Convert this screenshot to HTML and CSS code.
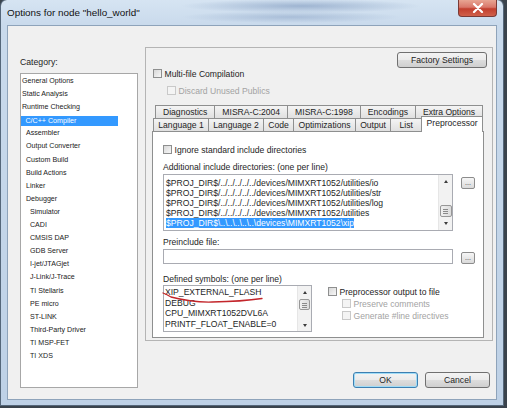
FILE: index.html
```html
<!DOCTYPE html>
<html>
<head>
<meta charset="utf-8">
<link rel="stylesheet" href="styles.css">
</head>
<body>
<div class="window">
  <div class="titlebar">
    <span class="title">Options for node "hello_world"</span>
    <div class="close">
      <svg width="12" height="10" viewBox="0 0 12 10"><path d="M2 1 L10 9 M10 1 L2 9" stroke="#fff" stroke-width="2.2" stroke-linecap="round"/></svg>
    </div>
  </div>
  <div class="client">
    <div class="left">
      <div class="cat-label">Category:</div>
      <div class="tree">
        <div class="item l0">General Options</div>
        <div class="item l0">Static Analysis</div>
        <div class="item l0">Runtime Checking</div>
        <div class="item l1 sel"><span>C/C++ Compiler</span></div>
        <div class="item l1">Assembler</div>
        <div class="item l1">Output Converter</div>
        <div class="item l1">Custom Build</div>
        <div class="item l1">Build Actions</div>
        <div class="item l1">Linker</div>
        <div class="item l1">Debugger</div>
        <div class="item l2">Simulator</div>
        <div class="item l2">CADI</div>
        <div class="item l2">CMSIS DAP</div>
        <div class="item l2">GDB Server</div>
        <div class="item l2">I-jet/JTAGjet</div>
        <div class="item l2">J-Link/J-Trace</div>
        <div class="item l2">TI Stellaris</div>
        <div class="item l2">PE micro</div>
        <div class="item l2">ST-LINK</div>
        <div class="item l2">Third-Party Driver</div>
        <div class="item l2">TI MSP-FET</div>
        <div class="item l2">TI XDS</div>
      </div>
    </div>
    <div class="right">
      <div class="panel">
        <div class="panel-top"><div class="btn factory">Factory Settings</div></div>
        <div class="check multi"><span class="box"></span>Multi-file Compilation</div>
        <div class="check discard disabled"><span class="box"></span>Discard Unused Publics</div>
        <div class="tabs">
          <div class="tabrow back">
            <div class="tab">Diagnostics</div>
            <div class="tab">MISRA-C:2004</div>
            <div class="tab">MISRA-C:1998</div>
            <div class="tab">Encodings</div>
            <div class="tab">Extra Options</div>
          </div>
          <div class="tabrow front">
            <div class="tab">Language 1</div>
            <div class="tab">Language 2</div>
            <div class="tab">Code</div>
            <div class="tab">Optimizations</div>
            <div class="tab">Output</div>
            <div class="tab list">List</div>
            <div class="tab sel">Preprocessor</div>
          </div>
          <div class="page">
            <div class="check ignore"><span class="box"></span>Ignore standard include directories</div>
            <div class="label lbl-inc">Additional include directories: (one per line)</div>
            <div class="row">
              <div class="textbox inc">
                <div class="lines">
                  <div>$PROJ_DIR$/../../../../../devices/MIMXRT1052/utilities/io</div>
                  <div>$PROJ_DIR$/../../../../../devices/MIMXRT1052/utilities/str</div>
                  <div>$PROJ_DIR$/../../../../../devices/MIMXRT1052/utilities/log</div>
                  <div>$PROJ_DIR$/../../../../../devices/MIMXRT1052/utilities</div>
                  <div><span class="hl">$PROJ_DIR$\..\..\..\..\..\devices\MIMXRT1052\xip</span></div>
                </div>
                <div class="sbar bottom">
                  <div class="arr"><span class="up"></span></div>
                  <div class="track"><div class="thumb"></div></div>
                  <div class="arr"><span class="down"></span></div>
                </div>
              </div>
              <div class="dots">...</div>
            </div>
            <div class="label lbl-pre">Preinclude file:</div>
            <div class="row">
              <div class="textbox preinc"></div>
              <div class="dots">...</div>
            </div>
            <div class="label lbl-def">Defined symbols: (one per line)</div>
            <div class="row defrow">
              <div class="textbox def">
                <div class="lines">
                  <div>XIP_EXTERNAL_FLASH</div>
                  <div>DEBUG</div>
                  <div>CPU_MIMXRT1052DVL6A</div>
                  <div>PRINTF_FLOAT_ENABLE=0</div>
                </div>
                <div class="sbar top">
                  <div class="arr"><span class="up"></span></div>
                  <div class="track"><div class="thumb"></div></div>
                  <div class="arr"><span class="down"></span></div>
                </div>
                <svg class="scribble" width="120" height="24" viewBox="0 0 120 24"><path d="M1 6 Q4 7 9 10 Q30 15.5 50 15 Q80 14.5 100 11.5" fill="none" stroke="#c3262b" stroke-width="1.3" stroke-linecap="round"/></svg>
              </div>
              <div class="ppgroup">
                <div class="check"><span class="box"></span>Preprocessor output to file</div>
                <div class="check sub disabled"><span class="box"></span>Preserve comments</div>
                <div class="check sub disabled"><span class="box"></span>Generate #line directives</div>
              </div>
            </div>
          </div>
        </div>
      </div>
      <div class="buttons">
        <div class="btn ok">OK</div>
        <div class="btn">Cancel</div>
      </div>
    </div>
  </div>
</div>
</body>
</html>
```
FILE: styles.css
```css
* { box-sizing: border-box; }
body {
  margin: 0;
  width: 507px;
  height: 408px;
  overflow: hidden;
  background: #3a434c;
  font-family: "Liberation Sans", Arial, sans-serif;
  color: #1e1e1e;
}
.window {
  margin-left: 1px;
  width: 502px;
  height: 405px;
  padding: 0 6px 5px 6px;
  border-radius: 6px 6px 0 0;
  box-shadow: 0 0 0 1px #55677a;
  display: flex;
  flex-direction: column;
  background:
    radial-gradient(ellipse 120px 7px at 300px 6px, rgba(60,95,150,.35), transparent),
    radial-gradient(ellipse 110px 6px at 290px 17px, rgba(60,95,150,.25), transparent),
    linear-gradient(180deg, #d6e4f2 0px, #c9daec 25px, #bed1e6 100%);
}
.titlebar {
  height: 25px;
  flex: none;
  display: flex;
  justify-content: space-between;
  align-items: flex-start;
}
.title {
  font-size: 9.9px;
  line-height: 11px;
  margin-top: 7px;
  color: #111;
}
.close {
  width: 39px;
  height: 17px;
  border: 1px solid #7a3a36;
  border-top: none;
  border-radius: 0 0 4px 4px;
  background: linear-gradient(180deg, #e8a593 0%, #d9776a 45%, #c23f2e 55%, #d0604a 100%);
  display: flex;
  align-items: center;
  justify-content: center;
}
.client {
  flex: 1;
  background: #f0f0f0;
  border: 1px solid #8ea3ba;
  display: flex;
  padding-left: 12px;
}
.left {
  width: 118px;
  padding-top: 31px;
}
.cat-label {
  font-size: 8.7px;
  line-height: 10px;
  height: 10px;
  margin-bottom: 6px;
}
.tree {
  height: 315px;
  background: #fff;
  border: 1px solid #a7a7a7;
  padding-top: 1px;
}
.item {
  font-size: 7.1px;
  line-height: 13.1px;
  height: 13.1px;
  color: #222;
  white-space: nowrap;
}
.item.l0 { padding-left: 1px; }
.item.l1 { padding-left: 5px; }
.item.l2 { padding-left: 9px; }
.item.sel { padding-left: 0; display: flex; align-items: center; }
.item.sel span {
  display: block;
  width: 97px;
  height: 10px;
  line-height: 10px;
  padding-left: 4.5px;
  background: #3399ff;
  color: #fff;
}
.right {
  margin-left: 7px;
  width: 348px;
  padding-top: 21px;
  display: flex;
  flex-direction: column;
}
.panel {
  height: 294px;
  border: 1px solid #b4b4b4;
  display: flex;
  flex-direction: column;
}
.panel-top {
  display: flex;
  justify-content: flex-end;
  padding: 4px 5px 0 0;
}
.btn {
  height: 16px;
  border: 1px solid #707070;
  border-radius: 3px;
  background: linear-gradient(180deg, #f3f3f3 0%, #ebebeb 48%, #dddddd 52%, #cfcfcf 100%);
  font-size: 8.6px;
  line-height: 14px;
  text-align: center;
  color: #1e1e1e;
}
.factory { width: 90px; }
.check {
  display: flex;
  align-items: center;
  gap: 2.5px;
  height: 9px;
  font-size: 8.6px;
  line-height: 10px;
  white-space: nowrap;
}
.box {
  width: 9px;
  height: 9px;
  flex: none;
  border: 1px solid #8e8f8f;
  background: linear-gradient(135deg, #d8d8d8, #f7f7f7);
}
.check.disabled { color: #a3a3a3; }
.check.disabled .box { border-color: #c9c9c9; background: #f4f4f4; }
.multi { margin: 1px 0 0 7px; }
.discard { margin: 8px 0 0 21px; }
.tabs {
  margin: 10px 8px 0 6px;
}
.tabrow {
  display: flex;
  height: 13px;
}
.tabrow.back { margin: 0 1px 0 3px; }
.tabrow.front { margin: 0 1px 0 1px; }
.tab {
  flex: 1 1 auto;
  border: 1px solid #8e8f8f;
  border-bottom: none;
  margin-right: -1px;
  background: linear-gradient(180deg, #f4f4f4, #e0e0e0);
  font-size: 8.6px;
  line-height: 12px;
  text-align: center;
  white-space: nowrap;
  padding: 0 2px;
}
.tab:last-child { margin-right: 0; }
.tab.list { min-width: 32px; }
.tab.sel {
  position: relative;
  z-index: 1;
  align-self: flex-start;
  height: 16px;
  margin-top: -2px;
  background: #fff;
  line-height: 12px;
}
.page {
  height: 207px;
  border: 1px solid #8e8f8f;
  background: #fff;
  padding: 13px 0 0 10px;
}
.label {
  font-size: 8.6px;
  line-height: 10px;
  height: 10px;
  white-space: nowrap;
}
.lbl-inc { margin-top: 8px; }
.lbl-pre { margin-top: 6px; }
.lbl-def { margin-top: 10px; }
.row {
  display: flex;
  align-items: flex-start;
  margin-top: 2px;
}
.defrow { margin-top: 1px; }
.textbox {
  border: 1px solid #a9abb2;
  background: #fff;
  display: flex;
}
.inc { width: 290px; height: 57px; }
.preinc { width: 290px; height: 15px; }
.def { width: 149px; height: 47px; position: relative; }
.lines {
  flex: 1;
  font-size: 8.6px;
  white-space: nowrap;
  overflow: hidden;
}
.inc .lines { padding: 3px 0 0 2px; line-height: 10px; }
.def .lines { padding: 1px 0 0 1px; line-height: 10.7px; }
.hl { background: #3399ff; color: #fff; }
.sbar {
  width: 14px;
  flex: none;
  display: flex;
  flex-direction: column;
  background: #f2f2f2;
  border-left: 1px solid #e6e6e6;
}
.arr {
  height: 13px;
  flex: none;
  display: flex;
  align-items: center;
  justify-content: center;
}
.def .arr { height: 12px; }
.up {
  width: 0; height: 0;
  border-left: 2.5px solid transparent;
  border-right: 2.5px solid transparent;
  border-bottom: 3px solid #3c3c3c;
}
.down {
  width: 0; height: 0;
  border-left: 2.5px solid transparent;
  border-right: 2.5px solid transparent;
  border-top: 3px solid #3c3c3c;
}
.track {
  flex: 1;
  display: flex;
  flex-direction: column;
  align-items: center;
}
.sbar.bottom .track { justify-content: flex-end; }
.sbar.top .track { justify-content: flex-start; padding-top: 1px; }
.thumb {
  width: 12px;
  height: 12px;
  border: 1px solid #979797;
  border-radius: 2px;
  background:
    linear-gradient(#8a8a8a, #8a8a8a) center 3px / 5px 1px no-repeat,
    linear-gradient(#8a8a8a, #8a8a8a) center 5px / 5px 1px no-repeat,
    linear-gradient(#8a8a8a, #8a8a8a) center 7px / 5px 1px no-repeat,
    linear-gradient(90deg, #f0f0f0, #dcdcdc);
}
.def .thumb { width: 11px; height: 11px; }
.dots {
  width: 14px;
  height: 12px;
  margin: 3px 0 0 8px;
  border: 1px solid #8c8c8c;
  border-radius: 2px;
  background: linear-gradient(180deg, #f6f6f6, #dadada);
  font-size: 7px;
  line-height: 9px;
  text-align: center;
  color: #333;
}
.scribble {
  position: absolute;
  left: -2px;
  top: 1px;
  overflow: visible;
}
.ppgroup {
  margin: 2px 0 0 16px;
  display: flex;
  flex-direction: column;
  gap: 3px;
}
.ppgroup .sub { margin-left: 14px; }
.buttons {
  display: flex;
  justify-content: flex-end;
  gap: 7px;
  margin-top: 31px;
  padding-right: 3px;
}
.buttons .btn { width: 65px; }
.btn.ok {
  border-color: #3c7fb1;
  box-shadow: inset 0 0 0 1px #9fdcf7;
}
```
